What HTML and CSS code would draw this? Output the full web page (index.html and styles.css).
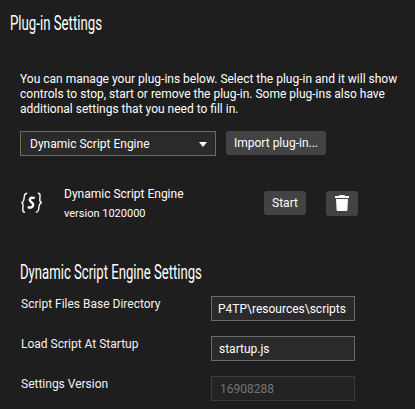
FILE: index.html
```
<!DOCTYPE html>
<html lang="en">
<head>
<meta charset="utf-8">
<title>Plug-in Settings</title>
<link rel="stylesheet" href="styles.css">
</head>
<body>
<main class="page">
  <h1 class="title"><span class="condensed">Plug-in Settings</span></h1>
  <p class="intro">You can manage your plug-ins below. Select the plug-in and it will show<br>controls to stop, start or remove the plug-in. Some plug-ins also have<br>additional settings that you need to fill in.</p>
  <div class="picker">
    <div class="select"><span>Dynamic Script Engine</span><svg class="arrow" width="8" height="5" viewBox="0 0 8 5"><path d="M0 0h8L4 5z" fill="#fff"/></svg></div>
    <button class="btn import">Import plug-in...</button>
  </div>
  <section class="plugin">
    <svg class="logo" width="24" height="22" viewBox="0 0 24 22" fill="none" stroke="#fff">
      <path d="M7.2 1.2C4.6 1.2 4.5 2.6 4.2 5L3.9 7.3C3.7 9.2 3 10.4 1.4 10.6C2.8 10.9 3.2 12 3 14L2.8 16.5C2.6 19 3.1 20.3 5 20.3" stroke-width="1.4"/>
      <path d="M17.8 1.2C20 1.2 20.2 2.5 20 4.8L19.8 7.2C19.6 9.2 20.1 10.3 21.8 10.6C20 11 19.4 12 19.1 14L18.8 16.5C18.4 19 17.9 20.3 15.8 20.3" stroke-width="1.4"/>
      <path d="M14.7 6.2C12.4 5.1 10 5.7 9.8 7.9C9.6 10.4 13.6 10.2 13.2 13C12.9 15.6 10.2 16.2 7.8 14.8" stroke-width="2.5"/>
    </svg>
    <div class="info"><div class="name">Dynamic Script Engine</div><div class="version">version 1020000</div></div>
    <button class="btn start">Start</button>
    <button class="btn trash" aria-label="Remove"><svg width="14" height="16" viewBox="0 0 14 16" fill="#fff"><path d="M4.6 0h4.8l.8 1H14v2H0V1h3.8zM1 4h12l-.6 11q-.1 1-1 1H2.6q-.9 0-1-1z"/></svg></button>
  </section>
  <h2 class="subtitle"><span class="condensed">Dynamic Script Engine Settings</span></h2>
  <div class="form">
    <label class="label">Script Files Base Directory</label><div class="field scrolled"><span class="path">P4TP\resources\scripts</span></div>
    <label class="label">Load Script At Startup</label><div class="field script"><span>startup.js</span></div>
    <label class="label">Settings Version</label><div class="field disabled"><span class="num">16908288</span></div>
  </div>
</main>
</body>
</html>
```
FILE: styles.css
```
* { box-sizing: border-box; }
body { margin: 0; background: #1e1e1e; color: #fff; font: 12px/15px Roboto, sans-serif; overflow: hidden; }
.page { width: 415px; height: 409px; padding: 11px 0 0 20px; }
h1, h2, p { margin: 0; font-weight: 400; }
.title { height: 24px; margin-left: -10px; font-size: 20.5px; line-height: 24px; }
.condensed { display: inline-block; white-space: nowrap; transform-origin: 0 50%; transform: scaleX(.64); }
.title .condensed { transform: scaleX(.645); }
.intro { margin-top: 37px; white-space: nowrap; }
.picker { display: flex; gap: 10px; margin-top: 14px; }
.select { display: flex; align-items: center; justify-content: space-between; width: 196px; height: 25px; padding: 1px 8px 0 9px; background: #2a2a2a; border: 1px solid #6b6b6b; }
.btn { display: flex; align-items: center; justify-content: center; height: 24px; padding: 0; border: 0; border-radius: 3px; background: #434343; color: #fff; font: 12px/15px Roboto, sans-serif; white-space: nowrap; }
.import { width: 100px; }
.plugin { display: flex; align-items: flex-start; height: 40px; margin-top: 29px; }
.logo { margin-top: 7px; }
.info { width: 200px; margin-left: 20px; padding-top: 2px; }
.version { margin-top: 4px; font-size: 11px; }
.start { width: 42px; margin-top: 6px; }
.trash { width: 32px; height: 25px; margin: 6px 0 0 20px; padding-bottom: 1px; }
.subtitle { margin-top: 35px; height: 24px; font-size: 20.5px; line-height: 24px; }
.form { display: grid; grid-template-columns: 191px 144px; row-gap: 15px; margin-top: 12px; }
.label { padding: 1px 0 0 1px; color: #f2f2f2; }
.field { display: flex; align-items: center; height: 25px; padding: 1px 0 0 8px; background: #2a2a2a; border: 1px solid #6b6b6b; overflow: hidden; white-space: nowrap; }
.scrolled { padding-left: 6px; }
.script { padding-left: 7px; }
.disabled { background: #232323; border-color: #3b3b3b; color: #747474; }
```
